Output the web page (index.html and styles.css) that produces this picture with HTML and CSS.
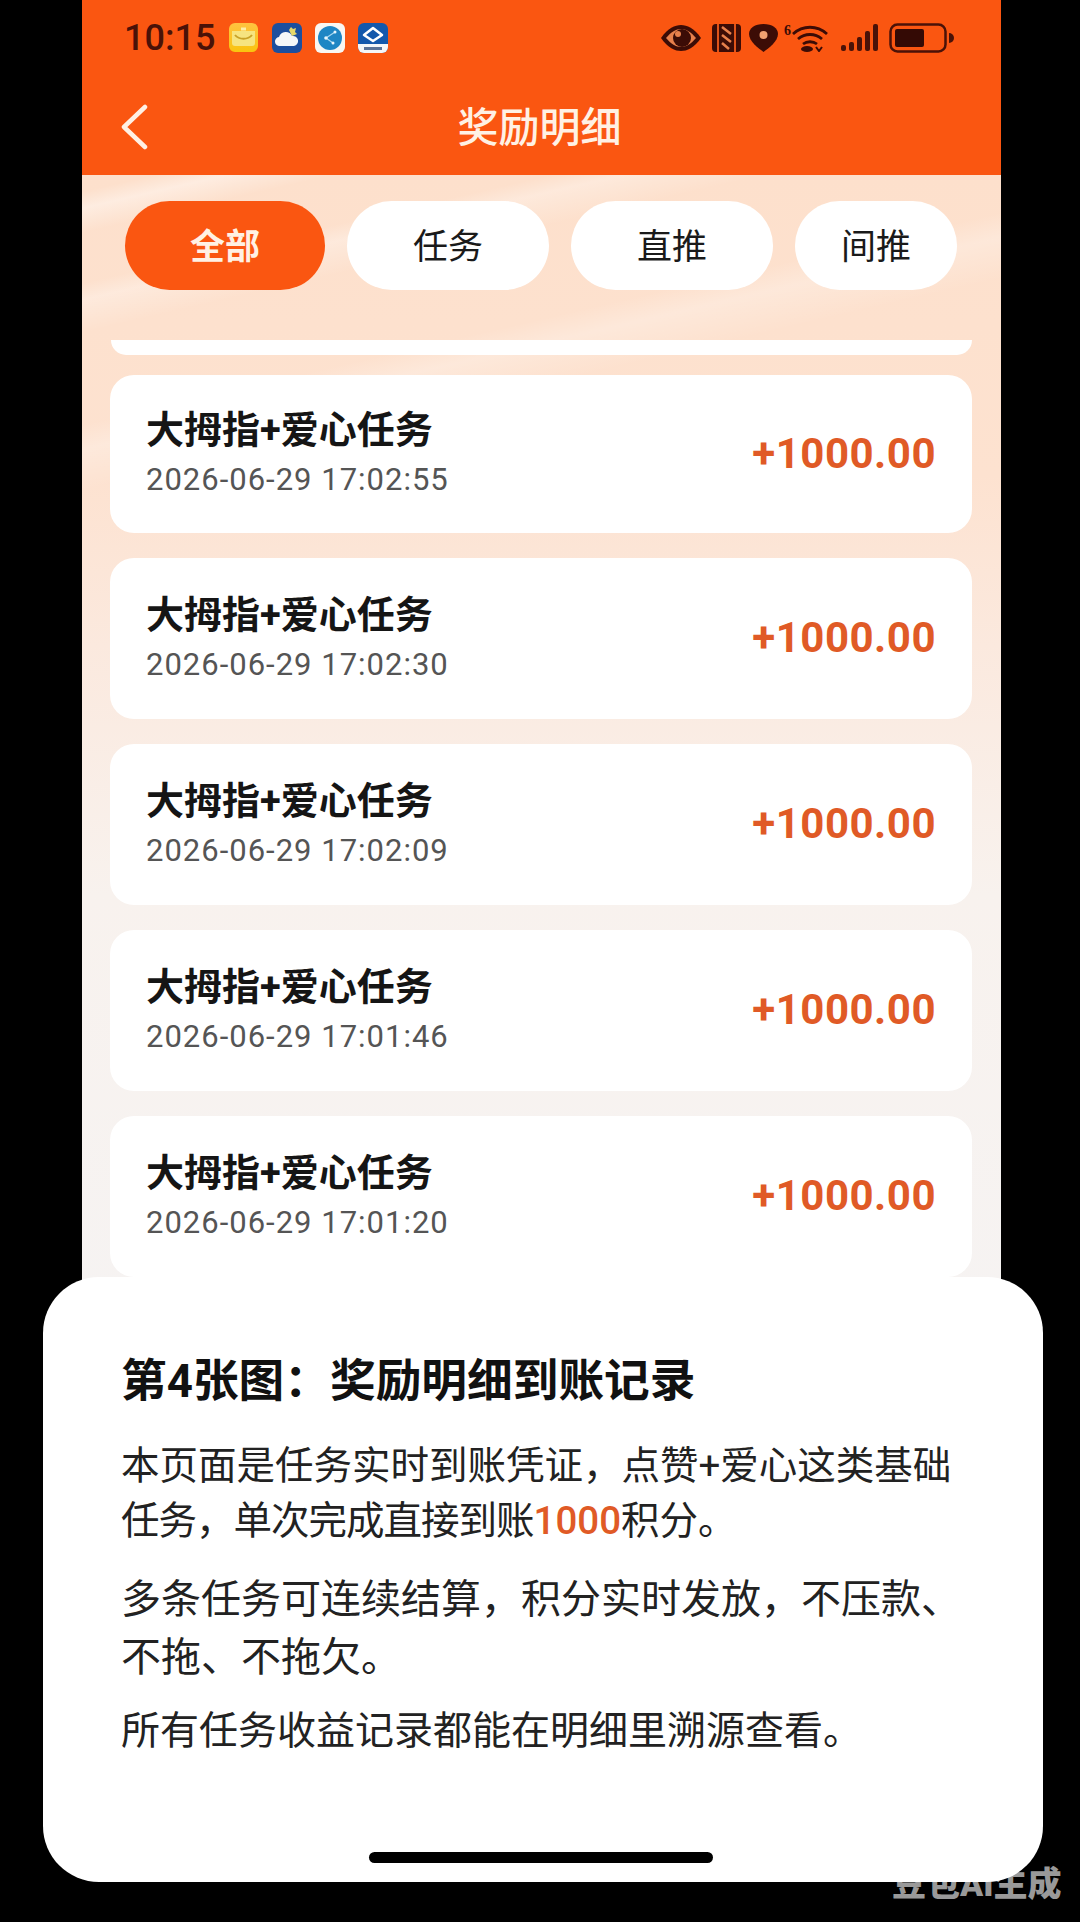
FILE: index.html
```html
<!DOCTYPE html>
<html lang="zh-CN">
<head>
  <meta charset="UTF-8">
  <meta name="viewport" content="width=device-width, initial-scale=1.0">
  <title>奖励明细</title>
  <link rel="stylesheet" href="styles.css">
</head>
<body>
  <div class="phone">
    <header class="top">
      <div class="status-bar">
        <div class="status-left">
          <span class="time">10:15</span>
          <svg class="app-icon" viewBox="0 0 30 30">
            <defs><linearGradient id="mailbg" x1="0" y1="0" x2="0" y2="1"><stop offset="0" stop-color="#ffc240"/><stop offset="1" stop-color="#f9c40f"/></linearGradient></defs>
            <rect x="0" width="29" height="29" rx="6" fill="url(#mailbg)"/>
            <path d="M3 8h23v12a3 3 0 0 1-3 3H6a3 3 0 0 1-3-3z" fill="#f6e480"/>
            <path d="M6 12c4 5 13 5 17 0" fill="none" stroke="#c9a227" stroke-width="2"/>
            <path d="M12 6h5" stroke="#fdeea8" stroke-width="3"/>
          </svg>
          <svg class="app-icon" viewBox="0 0 30 30">
            <rect width="30" height="30" rx="6" fill="#1c4f9e"/>
            <path d="M17 7l2-3 2 2 3-1-1 4 2 2-5 2z" fill="#e7d86a"/>
            <path d="M8 23a4.500 4.500 0 0 1-1-9 7 7 0 0 1 13-1 5 5 0 0 1 2 10z" fill="#f5f7f8"/>
          </svg>
          <svg class="app-icon" viewBox="0 0 30 30">
            <rect width="30" height="30" rx="6" fill="#f8f7f3"/>
            <circle cx="15" cy="15" r="12" fill="#1e86c4"/>
            <path d="M20 9l-9 6 7 5" fill="none" stroke="#a8d8f0" stroke-width="1.200"/>
            <circle cx="11" cy="15" r="1.800" fill="#e8f6fc"/>
            <circle cx="20" cy="9" r="1.500" fill="#e8f6fc"/>
            <circle cx="18" cy="20" r="1.500" fill="#e8f6fc"/>
          </svg>
          <svg class="app-icon" viewBox="0 0 30 30">
            <rect width="30" height="30" rx="6" fill="#1358ac"/>
            <path d="M0 21h30v3a6 6 0 0 1-6 6H6a6 6 0 0 1-6-6z" fill="#f4f6f8"/>
            <path d="M15 5l9 7-9 6-9-6z" fill="none" stroke="#fff" stroke-width="2.500" stroke-linejoin="round"/>
            <path d="M6 24h18v3H6z" fill="#5a7296"/>
          </svg>
        </div>
        <div class="status-right">
          <svg class="eye" viewBox="0 0 40 26">
            <path d="M0 13C7 3 14 0 20 0s13 3 20 13c-7 10-14 13-20 13S7 23 0 13z" fill="#3c0c06"/>
            <path d="M5 13c5-6 10-9 15-9s10 3 15 9c-5 6-10 9-15 9S10 19 5 13z" fill="#e8804c"/>
            <circle cx="21" cy="13" r="9" fill="#3c0c06"/>
            <circle cx="17" cy="9" r="3" fill="#e8804c"/>
          </svg>
          <svg class="nfc" viewBox="0 0 29 28">
            <rect width="29" height="28" rx="4" fill="#3c0c06"/>
            <path d="M6 0v28M23 0v28" stroke="#e0541a" stroke-width="2"/>
            <path d="M10 3l9 7M10 11l9 7M10 19l7 6" stroke="#e8804c" stroke-width="2.500"/>
          </svg>
          <svg class="pin" viewBox="0 0 29 28">
            <path d="M14.500 0C23 0 29 4 29 10c0 7-9 14-14.500 18C9 24 0 17 0 10 0 4 6 0 14.500 0z" fill="#3c0c06"/>
            <circle cx="14.500" cy="11" r="4" fill="#f0a070"/>
          </svg>
          <div class="wifi-wrap">
            <span class="wifi-six">6</span>
            <svg class="wifi" viewBox="0 0 36 28">
              <path d="M1 10c10-9 24-9 34 0M6 15c7-6 17-6 24 0M11 20c4-3 10-3 14 0" fill="none" stroke="#3c0c06" stroke-width="2.800"/>
              <ellipse cx="15" cy="25" rx="6" ry="3" fill="#3c0c06"/>
              <path d="M24 23l3 4 3-4" fill="none" stroke="#3c0c06" stroke-width="2"/>
            </svg>
          </div>
          <svg class="signal" viewBox="0 0 38 28">
            <rect x="0" y="21" width="5" height="6" rx="2" fill="#4a1208"/>
            <rect x="8" y="18" width="5" height="9" rx="2" fill="#4a1208"/>
            <rect x="16" y="13" width="5" height="14" rx="2" fill="#4a1208"/>
            <rect x="24" y="7" width="5" height="20" rx="2" fill="#4a1208"/>
            <rect x="32" y="0" width="5" height="27" rx="2" fill="#4a1208"/>
          </svg>
          <svg class="battery" viewBox="0 0 66 30">
            <rect x="1.500" y="1.500" width="55" height="27" rx="7" fill="none" stroke="#4a1208" stroke-width="2.500"/>
            <rect x="6" y="6" width="29" height="18" rx="2" fill="#340a05"/>
            <path d="M60 10a5 5 0 0 1 0 10z" fill="#4a1208"/>
          </svg>
        </div>
      </div>
      <div class="nav">
        <svg class="back" viewBox="0 0 28 46">
          <path d="M25 3L4 23l21 20" fill="none" stroke="#fff0e4" stroke-width="4.500" stroke-linecap="round" stroke-linejoin="round"/>
        </svg>
        <h1>奖励明细</h1>
      </div>
    </header>

    <div class="content">
      <div class="tabs">
        <div class="tab active tab-all">全部</div>
        <div class="tab">任务</div>
        <div class="tab">直推</div>
        <div class="tab tab-last">间推</div>
      </div>

      <div class="card-stub"></div>

      <div class="list">
        <div class="card card-first">
          <div class="card-info">
            <div class="card-title">大拇指+爱心任务</div>
            <div class="card-date">2026-06-29 17:02:55</div>
          </div>
          <div class="card-amount">+1000.00</div>
        </div>
        <div class="card">
          <div class="card-info">
            <div class="card-title">大拇指+爱心任务</div>
            <div class="card-date">2026-06-29 17:02:30</div>
          </div>
          <div class="card-amount">+1000.00</div>
        </div>
        <div class="card">
          <div class="card-info">
            <div class="card-title">大拇指+爱心任务</div>
            <div class="card-date">2026-06-29 17:02:09</div>
          </div>
          <div class="card-amount">+1000.00</div>
        </div>
        <div class="card">
          <div class="card-info">
            <div class="card-title">大拇指+爱心任务</div>
            <div class="card-date">2026-06-29 17:01:46</div>
          </div>
          <div class="card-amount">+1000.00</div>
        </div>
        <div class="card">
          <div class="card-info">
            <div class="card-title">大拇指+爱心任务</div>
            <div class="card-date">2026-06-29 17:01:20</div>
          </div>
          <div class="card-amount">+1000.00</div>
        </div>
      </div>
    </div>
  </div>

  <div class="watermark">豆包AI生成</div>

  <!-- white caption sheet lying over the screenshot -->
  <section class="sheet">
    <h2>第4张图：奖励明细到账记录</h2>
    <p class="para-one">本页面是任务实时到账凭证，点赞+爱心这类基础<span class="tight">任务，单次完成直接到账</span><span class="num">1000</span>积分。</p>
    <p class="para-two">多条任务可连续结算，积分实时发放，不压款、不拖、不拖欠。</p>
    <p class="para-three">所有任务收益记录都能在明细里溯源查看。</p>
    <div class="home-bar"></div>
  </section>
</body>
</html>
```

FILE: styles.css
```css
* {
  box-sizing: border-box;
}

html,
body {
  height: 100%;
}

body {
  position: relative;
  margin: 0;
  overflow: hidden;
  background-color: #000;
  font-family: Roboto, "Noto Sans CJK SC", sans-serif;
  color: #1a1a1a;
}

.phone {
  width: 919px;
  height: 1300px;
  margin-left: 82px;
  display: flex;
  flex-direction: column;
}

/* Orange header */
.top {
  height: 175px;
  flex-shrink: 0;
  background-color: #fa5611;
}

.status-bar {
  height: 76px;
  padding: 0 46px 0 42px;
  display: flex;
  justify-content: space-between;
  align-items: center;
}

.status-left {
  display: flex;
  align-items: center;
  gap: 13px;
}

.time {
  margin-right: 1px;
  font-size: 36px;
  font-weight: 500;
  color: #4a1208;
}

.app-icon {
  width: 30px;
  height: 30px;
}

.status-right {
  display: flex;
  align-items: center;
}

.eye {
  width: 40px;
  height: 26px;
}

.nfc {
  width: 29px;
  height: 28px;
  margin-left: 11px;
}

.pin {
  width: 29px;
  height: 28px;
  margin-left: 8px;
}

.wifi-wrap {
  margin-left: 6px;
  display: flex;
  align-items: flex-start;
}

.wifi-six {
  font-family: "Liberation Serif", serif;
  font-size: 14px;
  font-weight: 700;
  line-height: 14px;
  color: #3c0c06;
}

.wifi {
  width: 36px;
  height: 28px;
  margin-left: 1px;
}

.signal {
  width: 38px;
  height: 28px;
  margin-left: 13px;
}

.battery {
  width: 66px;
  height: 30px;
  margin-left: 10px;
}

.nav {
  position: relative;
  height: 99px;
  display: flex;
  justify-content: center;
  align-items: center;
}

.back {
  position: absolute;
  left: 38px;
  top: 28px;
  width: 28px;
  height: 46px;
}

.nav h1 {
  margin: 0 0 4px -4px;
  font-size: 41px;
  font-weight: 500;
  color: #fff1e4;
}

/* Page body, soft streaks fade out towards the bottom */
.content {
  flex: 1;
  padding-top: 26px;
  background:
    linear-gradient(167deg, transparent 2%, rgba(255, 255, 255, 0.4) 4%, transparent 7%, transparent 13%, rgba(255, 255, 255, 0.3) 15%, transparent 19%, transparent 30%, rgba(255, 255, 255, 0.25) 33%, transparent 38%) 0 0 / 100% 620px no-repeat,
    linear-gradient(to bottom, #fde0cc 0, #fde2d0 300px, #fbe9de 470px, #f8f2ee 720px, #f6f3f2 1125px);
}

.tabs {
  display: flex;
  gap: 22px;
  padding-left: 43px;
}

.tab {
  width: 202px;
  height: 89px;
  padding-bottom: 4px;
  border-radius: 45px;
  background-color: #fff;
  display: flex;
  justify-content: center;
  align-items: center;
  font-size: 35px;
}

.tab.active {
  background-color: #fa5611;
  color: #fff1e4;
  font-weight: 700;
}

.tab-all {
  width: 200px;
}

.tab-last {
  width: 162px;
}

.card-stub {
  height: 15px;
  margin: 50px 29px 0;
  background-color: #fff;
  border-radius: 0 0 20px 20px;
}

.list {
  margin-top: 20px;
  padding: 0 29px 0 28px;
  display: flex;
  flex-direction: column;
  gap: 25px;
}

.card {
  height: 161px;
  padding: 0 36px 0 36px;
  flex-shrink: 0;
  border-radius: 24px;
  background-color: #fff;
  display: flex;
  justify-content: space-between;
  align-items: center;
}

.card-first {
  height: 158px;
}

.card-info {
  padding-bottom: 4px;
}

.card-title {
  margin-bottom: 6px;
  font-size: 38px;
  font-weight: 700;
  line-height: 50px;
  color: #151515;
}

.card-date {
  font-size: 31px;
  line-height: 38px;
  letter-spacing: 1px;
  color: #555;
}

.card-amount {
  padding-bottom: 2px;
  font-size: 42px;
  font-weight: 700;
  letter-spacing: 0.5px;
  color: #e05a26;
}

.watermark {
  position: absolute;
  left: 892px;
  top: 1857px;
  font-size: 34px;
  font-weight: 900;
  color: #999;
}

/* Caption sheet */
.sheet {
  position: absolute;
  left: 43px;
  top: 1277px;
  width: 1000px;
  height: 605px;
  padding: 77px 77px 0 78px;
  border-radius: 56px;
  background-color: #fff;
}

.sheet h2 {
  margin: 0 0 28px;
  font-size: 45.700px;
  line-height: 56px;
  font-weight: 700;
  color: #111;
}

.sheet p {
  margin: 0;
  color: #222;
}

.para-one {
  font-size: 38.500px;
  line-height: 55px;
}

.tight {
  letter-spacing: -1px;
}

.sheet .para-two {
  margin-top: 23px;
  font-size: 40px;
  line-height: 58px;
}

.sheet .para-three {
  margin-top: 16px;
  font-size: 39px;
  line-height: 56px;
}

.num {
  font-weight: 500;
  color: #e05a26;
}

.home-bar {
  position: absolute;
  left: 326px;
  bottom: 19px;
  width: 344px;
  height: 11px;
  border-radius: 6px;
  background-color: #000;
}
```
